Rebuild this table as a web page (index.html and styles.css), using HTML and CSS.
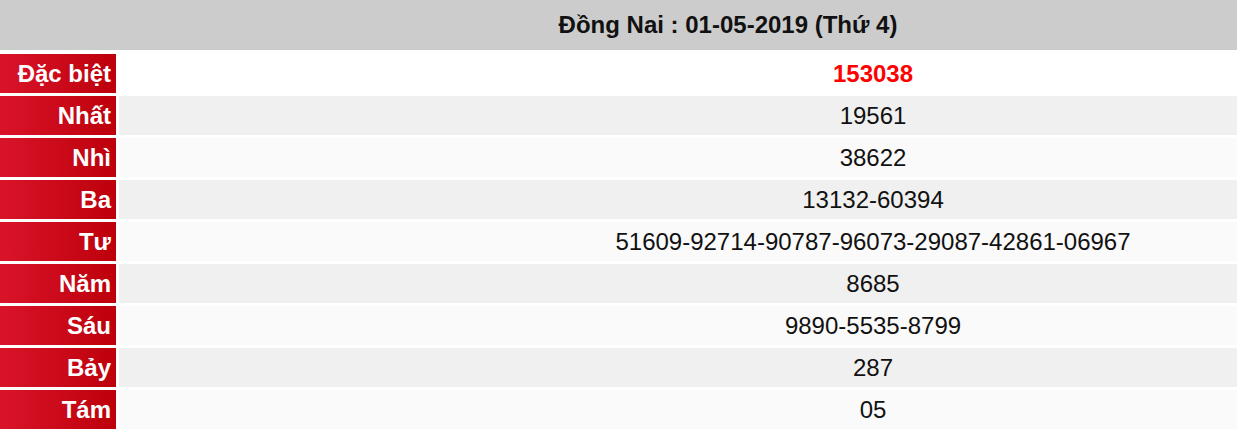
FILE: index.html
```html
<!DOCTYPE html>
<html lang="vi">
<head>
<meta charset="utf-8">
<title>Đồng Nai 01-05-2019</title>
<link rel="stylesheet" href="styles.css">
</head>
<body>
<div class="viewport">
  <div class="board">
    <div class="title">Đồng Nai : 01-05-2019 (Thứ 4)</div>
    <div class="prizes">
      <div class="label">Đặc biệt</div><div class="value special">153038</div>
      <div class="label">Nhất</div><div class="value even">19561</div>
      <div class="label">Nhì</div><div class="value odd">38622</div>
      <div class="label">Ba</div><div class="value even">13132-60394</div>
      <div class="label">Tư</div><div class="value odd">51609-92714-90787-96073-29087-42861-06967</div>
      <div class="label">Năm</div><div class="value even">8685</div>
      <div class="label">Sáu</div><div class="value odd">9890-5535-8799</div>
      <div class="label">Bảy</div><div class="value even">287</div>
      <div class="label">Tám</div><div class="value odd">05</div>
    </div>
  </div>
</div>
</body>
</html>
```

FILE: styles.css
```css
html, body {
  margin: 0;
  padding: 0;
  background: #fff;
  overflow: hidden;
}

.viewport {
  width: 100%;
  overflow: hidden;
}

.board {
  width: 1627px;
  font-family: "Liberation Sans", Arial, sans-serif;
  font-size: 24px;
}

.title {
  width: 1456px;
  height: 50px;
  background: #cccccc;
  color: #111;
  font-weight: bold;
  display: flex;
  align-items: center;
  justify-content: center;
}

.prizes {
  margin-top: 4px;
  display: grid;
  grid-template-columns: 116px 1508px;
  grid-auto-rows: 39px;
  column-gap: 3px;
  row-gap: 3px;
}

.label {
  background: linear-gradient(to right, #d9142a, #bd000b);
  color: #fff;
  font-weight: bold;
  display: flex;
  align-items: center;
  justify-content: flex-end;
  padding-right: 5px;
}

.value {
  display: flex;
  align-items: center;
  justify-content: center;
  color: #111;
}

.special {
  background: #fff;
  color: #ff0000;
  font-weight: bold;
}

.even {
  background: #f0f0f0;
}

.odd {
  background: #fafafa;
}
```
